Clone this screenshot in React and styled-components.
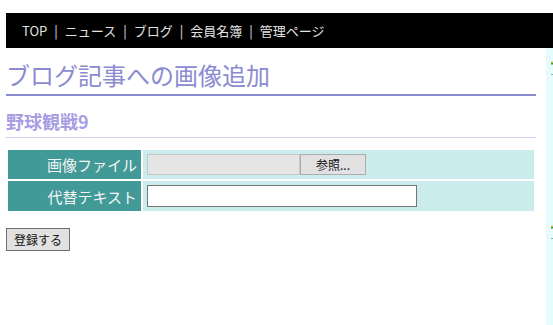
import React from 'react';
import styled, { createGlobalStyle } from 'styled-components';

const GlobalStyle = createGlobalStyle`
    html, body {
        margin: 0;
        padding: 0;
        overflow: hidden;
        background: #ffffff;
    }
    body {
        font-family: "Noto Sans CJK JP", "Noto Sans", sans-serif;
    }
`;

const navItems = ['TOP', 'ニュース', 'ブログ', '会員名簿', '管理ページ'];

const SideIcon = () => (
    <svg width="8" height="12" viewBox="0 0 8 12">
        <rect x="0" y="0" width="8" height="5" fill="#f2c14a" />
        <rect x="0" y="5" width="8" height="7" fill="#3c9a1c" />
    </svg>
);

const App = () => {
    return (
        <Page>
            <GlobalStyle />
            <Header>
                {navItems.map((item, i) => (
                    <NavItem key={item}>
                        {i > 0 && <Separator>|</Separator>}
                        {item}
                    </NavItem>
                ))}
            </Header>
            <Body>
                <Main>
                    <Title>ブログ記事への画像追加</Title>
                    <SubTitle>野球観戦9</SubTitle>
                    <FormTable>
                        <tbody>
                            <Row height={29}>
                                <LabelCell>画像ファイル</LabelCell>
                                <ValueCell>
                                    <FileInput>
                                        <FilePath />
                                        <BrowseButton>参照...</BrowseButton>
                                    </FileInput>
                                </ValueCell>
                            </Row>
                            <Row height={30}>
                                <LabelCell>代替テキスト</LabelCell>
                                <ValueCell>
                                    <TextInput type="text" />
                                </ValueCell>
                            </Row>
                        </tbody>
                    </FormTable>
                    <SubmitButton>登録する</SubmitButton>
                </Main>
                <Sidebar>
                    <SideHeading>
                        <SideIcon />
                    </SideHeading>
                    <SideHeading second>
                        <SideIcon />
                    </SideHeading>
                </Sidebar>
            </Body>
        </Page>
    );
};

const Page = styled.div`
    padding: 13px 0 0 6px;
`;

const Header = styled.div`
    display: flex;
    align-items: center;
    height: 35px;
    padding-left: 16px;
    background: #000000;
    color: #e2e2e2;
    font-size: 13px;
`;

const NavItem = styled.span`
    display: flex;
    align-items: center;
    white-space: nowrap;
`;

const Separator = styled.span`
    margin: 0 7px;
    color: #e2e2e2;
`;

const Body = styled.div`
    display: flex;
    align-items: flex-start;
`;

const Main = styled.div`
    flex: none;
    width: 530px;
`;

const Title = styled.h1`
    margin: 0;
    padding: 12px 0 4px;
    line-height: 30px;
    font-size: 24px;
    font-weight: normal;
    color: #8b8bd1;
    border-bottom: 2px solid #8b8bcf;
`;

const SubTitle = styled.h2`
    margin: 13px 0 0;
    padding-bottom: 4px;
    line-height: 24px;
    font-size: 18px;
    font-weight: bold;
    color: #a79de3;
    border-bottom: 1px solid #d0ccf4;
`;

const FormTable = styled.table`
    margin-top: 10px;
    width: 530px;
    border-spacing: 2px;
`;

const Row = styled.tr`
    height: ${(p) => p.height}px;
`;

const LabelCell = styled.th`
    width: 129px;
    padding: 0 4px 0 0;
    background: #419a98;
    color: #f4f4f4;
    font-size: 15px;
    font-weight: normal;
    text-align: right;
    vertical-align: middle;
    white-space: nowrap;
`;

const ValueCell = styled.td`
    padding: 0 4px;
    background: #cbeced;
    vertical-align: middle;
`;

const FileInput = styled.div`
    display: flex;
    height: 21px;
`;

const FilePath = styled.div`
    box-sizing: border-box;
    width: 153px;
    height: 21px;
    background: #e5e5e5;
    border: 1px solid #c6c6c6;
`;

const BrowseButton = styled.button`
    box-sizing: border-box;
    width: 66px;
    height: 21px;
    padding: 0;
    background: #e1e1e1;
    border: 1px solid #adadad;
    border-radius: 0;
    font-family: "Noto Sans CJK JP", sans-serif;
    font-size: 12px;
    color: #111111;
`;

const TextInput = styled.input`
    display: block;
    box-sizing: border-box;
    width: 270px;
    height: 22px;
    margin: 0;
    background: #ffffff;
    border: 1px solid #767676;
    border-radius: 0;
`;

const SubmitButton = styled.button`
    box-sizing: border-box;
    margin-top: 15px;
    width: 64px;
    height: 23px;
    padding: 0;
    background: #e1e1e1;
    border: 1px solid #707070;
    border-radius: 0;
    font-family: "Noto Sans CJK JP", sans-serif;
    font-size: 12px;
    color: #111111;
`;

const Sidebar = styled.div`
    flex: 1;
    min-width: 0;
    margin-left: 10px;
    height: 268px;
    padding: 9px 0 0 5px;
    background: #e6fcfc;
    overflow: hidden;
`;

const SideHeading = styled.div`
    display: flex;
    align-items: center;
    height: 12px;
    margin-top: ${(p) => (p.second ? '146px' : '0')};
    padding-bottom: 5px;
    border-bottom: 1px dotted #7ab8a8;
`;

export default App;
